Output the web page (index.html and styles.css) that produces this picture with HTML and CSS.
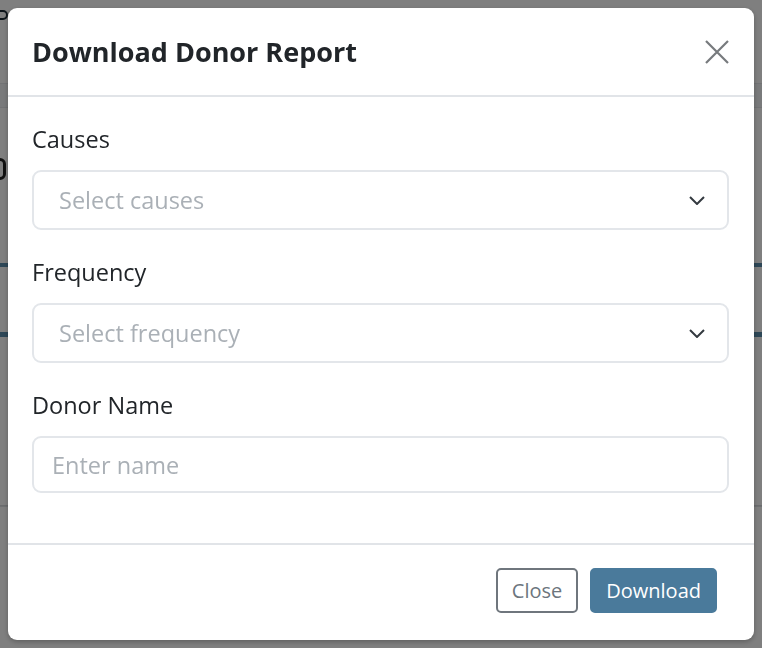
FILE: index.html
```html
<!DOCTYPE html>
<html lang="en">
<head>
<meta charset="utf-8">
<title>Download Donor Report</title>
<link rel="stylesheet" href="styles.css">
</head>
<body>
<div class="page">
  <div class="topbar"><span class="logo-mark"></span></div>
  <div class="band"></div>
  <div class="page-title"><span class="title-glyph"></span></div>
  <div class="table">
    <div class="table-head"></div>
    <div class="table-row first"></div>
    <div class="table-row"></div>
    <div class="table-row"></div>
  </div>
</div>

<div class="backdrop"></div>

<div class="modal" role="dialog" aria-labelledby="modal-title">
  <div class="modal-header">
    <h2 class="modal-title" id="modal-title">Download Donor Report</h2>
    <button class="btn-close" type="button" aria-label="Close">
      <svg viewBox="0 0 24 24" width="24" height="24"><path d="M1 1L23 23M23 1L1 23" stroke="#777a7d" stroke-width="2.2" stroke-linecap="butt" fill="none"/></svg>
    </button>
  </div>
  <div class="modal-body">
    <div class="form-group">
      <label class="form-label">Causes</label>
      <div class="select">
        <span class="placeholder">Select causes</span>
        <svg class="chevron" viewBox="0 0 16 9" width="16" height="9"><path d="M1 1L8 8L15 1" stroke="#343a40" stroke-width="2" fill="none"/></svg>
      </div>
    </div>
    <div class="form-group">
      <label class="form-label">Frequency</label>
      <div class="select">
        <span class="placeholder">Select frequency</span>
        <svg class="chevron" viewBox="0 0 16 9" width="16" height="9"><path d="M1 1L8 8L15 1" stroke="#343a40" stroke-width="2" fill="none"/></svg>
      </div>
    </div>
    <div class="form-group last">
      <label class="form-label">Donor Name</label>
      <input class="input" type="text" placeholder="Enter name">
    </div>
  </div>
  <div class="modal-footer">
    <button class="btn btn-outline" type="button">Close</button>
    <button class="btn btn-primary" type="button">Download</button>
  </div>
</div>
</body>
</html>
```

FILE: styles.css
```css
* { box-sizing: border-box; }

html, body {
  margin: 0;
  padding: 0;
  width: 762px;
  height: 648px;
  overflow: hidden;
  background: #ffffff;
  font-family: "Open Sans", "Noto Sans", "Liberation Sans", sans-serif;
  color: #212529;
}

/* underlying page, mostly hidden by the modal */
.page {
  display: flex;
  flex-direction: column;
}
.topbar {
  height: 83px;
  padding-top: 10px;
}
.logo-mark {
  display: block;
  width: 14px;
  height: 10px;
  margin-left: -6px;
  border: 2px solid #1c2b36;
  border-radius: 5px;
}
.band {
  height: 25px;
  background: #f3f5f7;
  border-top: 1px solid #e4e7ea;
  border-bottom: 1px solid #e4e7ea;
}
.page-title {
  margin-top: 50px;
  height: 22px;
}
.title-glyph {
  display: block;
  width: 12px;
  height: 22px;
  margin-left: -6px;
  border: 3px solid #222;
  border-radius: 6px;
}
.table {
  margin-top: 83px;
}
.table-head {
  height: 4px;
  background: #5b8eae;
}
.table-row {
  height: 70px;
  border-top: 1px solid #dfe2e5;
}
.table-row.first {
  height: 70px;
  border-top: 0;
  border-bottom: 5px solid #5b8eae;
}
.table-row.first + .table-row {
  border-top: 0;
  height: 169px;
  border-bottom: 1px solid #d6d9dc;
}

.backdrop {
  position: fixed;
  inset: 0;
  background: rgba(0, 0, 0, 0.5);
}

/* modal */
.modal {
  position: fixed;
  left: 8px;
  top: 8px;
  width: 746px;
  background: #ffffff;
  border-radius: 9px;
  box-shadow: 0 2px 5px rgba(0, 0, 0, 0.25);
  display: flex;
  flex-direction: column;
}

.modal-header {
  display: flex;
  align-items: center;
  justify-content: space-between;
  padding: 24px 25px 23px 24px;
  border-bottom: 2px solid #e1e4e8;
}
.modal-title {
  margin: 0;
  font-size: 27px;
  line-height: 40px;
  font-weight: 700;
  color: #212529;
}
.btn-close {
  width: 24px;
  height: 24px;
  padding: 0;
  margin: 0;
  border: 0;
  background: transparent;
  display: flex;
}

.modal-body {
  padding: 24px 25px 26px 24px;
}
.form-group {
  display: flex;
  flex-direction: column;
  margin-bottom: 24px;
}
.form-label {
  font-size: 23.5px;
  line-height: 36px;
  margin-bottom: 13px;
  color: #212529;
}
.select {
  height: 60px;
  border: 2px solid #e3e6ea;
  border-radius: 9px;
  display: flex;
  align-items: center;
  justify-content: space-between;
  padding: 0 22px 0 25px;
}
.placeholder {
  font-size: 23.5px;
  color: #aab0b6;
}
.chevron {
  display: block;
}
.input {
  height: 57px;
  border: 2px solid #e3e6ea;
  border-radius: 9px;
  padding: 0 18px;
  font-family: inherit;
  font-size: 23.5px;
  color: #212529;
  outline: none;
}
.input::placeholder {
  color: #aab0b6;
}

.modal-footer {
  display: flex;
  justify-content: flex-end;
  gap: 12px;
  padding: 23px 37px 27px 24px;
  border-top: 2px solid #e1e4e8;
}
.btn {
  height: 45px;
  padding: 0 14px;
  border-radius: 5px;
  font-family: inherit;
  font-size: 20px;
  line-height: 1;
  cursor: pointer;
}
.btn-outline {
  background: #ffffff;
  border: 2px solid #6f767d;
  color: #6c757d;
}
.btn-primary {
  background: #4a7a9b;
  border: 2px solid #4a7a9b;
  color: #ffffff;
}
```
